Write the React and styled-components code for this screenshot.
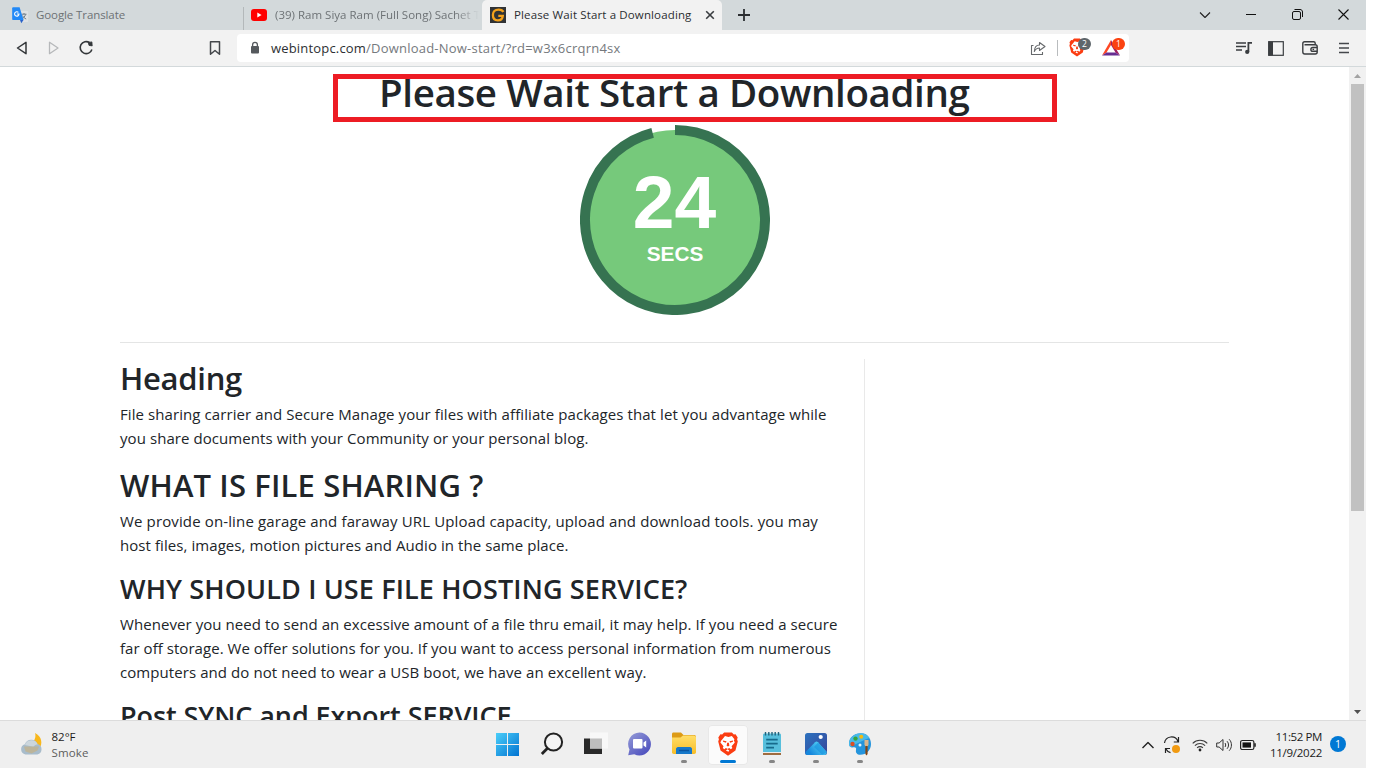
import React, { useLayoutEffect, useRef, useState } from "react";
import styled, { createGlobalStyle } from "styled-components";

const UI = `"Open Sans", "Noto Sans", sans-serif`;

const GlobalStyle = createGlobalStyle`
  *, *::before, *::after { box-sizing: border-box; }
  body { margin: 0; background: #fff; font-family: ${UI}; overflow: hidden; }
  h1, h2, h3, p { margin: 0; }
  svg { display: block; flex: none; }
`;

const Line = styled.span`
  display: block;
  width: max-content;
  white-space: pre;
`;

/* One line of text, tracked so that it spans the given width. */
function Fit({ w, children }) {
  const ref = useRef(null);
  const [spacing, setSpacing] = useState(0);
  useLayoutEffect(() => {
    const natural = ref.current.getBoundingClientRect().width;
    setSpacing((w - natural) / children.length);
  }, [w, children]);
  return (
    <Line ref={ref} style={{ letterSpacing: spacing }}>
      {children}
    </Line>
  );
}

const Desktop = styled.div`
  width: 1366px;
  height: 768px;
  display: flex;
  flex-direction: column;
  overflow: hidden;
`;

/* ---------- browser chrome ---------- */

const TabStrip = styled.div`
  height: 30px;
  flex: none;
  display: flex;
  background: #d3d9db;
`;

const Tab = styled.div`
  width: ${(p) => p.$w}px;
  height: 30px;
  flex: none;
  display: flex;
  align-items: center;
  gap: ${(p) => p.$gap ?? 8}px;
  padding-left: ${(p) => p.$pad}px;
  overflow: hidden;
  font-size: 11.5px;
  line-height: 30px;
  color: ${(p) => (p.$active ? "#2b2e31" : "#6d7275")};
  background: ${(p) => (p.$active ? "#f2f2f2" : "transparent")};
  border-radius: ${(p) => (p.$active ? "5px 5px 0 0" : "0")};
`;

const TabTitle = styled.div`
  width: ${(p) => p.$w}px;
  overflow: hidden;
  mask-image: ${(p) => (p.$fade ? "linear-gradient(90deg, #000 88%, transparent)" : "none")};
`;

const TabDivider = styled.div`
  width: 1px;
  height: 23px;
  margin-top: 7px;
  background: #b3b8ba;
`;

const NewTab = styled.div`
  padding: 9px 0 0 16px;
  flex: 1;
`;

const WindowControls = styled.div`
  display: flex;
  align-items: center;
  height: 29px;
  width: 167px;
  justify-content: space-between;
  padding: 0 17px 0 0;
`;

const Toolbar = styled.div`
  height: 37px;
  flex: none;
  display: flex;
  align-items: center;
  background: #f2f2f2;
  border-bottom: 1px solid #d3d9db;
`;

const NavButtons = styled.div`
  width: 237px;
  display: flex;
  align-items: center;
  padding-left: 15px;
  gap: 16px;
`;

const Push = styled.div`
  margin-left: ${(p) => p.$by}px;
`;

const AddressBar = styled.div`
  width: 892px;
  height: 28px;
  display: flex;
  align-items: center;
  padding-left: 12px;
  background: #fff;
  border-radius: 4px;
  font-size: 13px;
  color: #75797d;
`;

const Url = styled.div`
  display: flex;
  flex: 1;
  margin-left: 10px;
  line-height: 28px;
`;

const Host = styled.span`
  color: #2d3033;
`;

const AddressActions = styled.div`
  display: flex;
  align-items: center;
`;

const Separator = styled.div`
  width: 1px;
  height: 16px;
  margin: 0 11px 0 11px;
  background: #b9bcbe;
`;

const BadgeHost = styled.div`
  position: relative;
  width: ${(p) => p.$w}px;
  height: 20px;
`;

const Badge = styled.div`
  position: absolute;
  top: 0;
  left: ${(p) => p.$left}px;
  width: 13px;
  height: 12px;
  border-radius: 6px;
  background: ${(p) => p.$color};
  color: #fff;
  font-size: 8.5px;
  line-height: 12px;
  text-align: center;
`;

const ToolbarActions = styled.div`
  display: flex;
  flex: 1;
  align-items: center;
  padding-left: 107px;
`;

/* ---------- page ---------- */

const Viewport = styled.div`
  height: 653px;
  flex: none;
  display: flex;
  background: #fff;
`;

const Page = styled.div`
  position: relative;
  width: 1349px;
  height: 653px;
  overflow: hidden;
  color: #212529;
`;

const Highlight = styled.div`
  position: absolute;
  left: 333px;
  top: 7px;
  width: 724px;
  height: 48px;
  border: 5px solid #ed1c24;
`;

const Title = styled.h1`
  height: 58px;
  padding-left: 379px;
  font-size: 38.5px;
  font-weight: 540;
  line-height: 51px;
`;

const Timer = styled.div`
  width: 190px;
  height: 190px;
  margin-left: 580px;
  display: grid;

  & > * { grid-area: 1 / 1; }
`;

const TimerText = styled.div`
  z-index: 1;
  display: flex;
  flex-direction: column;
  align-items: center;
  padding-top: 41px;
  color: #fff;
  font-family: "Liberation Sans", Arial, sans-serif;
  font-weight: 700;
`;

const TimerCount = styled.div`
  margin-right: 1px;
  font-size: 75px;
  line-height: 72px;
`;

const TimerUnit = styled.div`
  margin-top: 5px;
  font-size: 20.8px;
  line-height: 22px;
`;

const Rule = styled.div`
  height: 1px;
  margin: 27px 120px 16px;
  background: #e4e5e5;
`;

const Columns = styled.div`
  display: flex;
  margin-left: 120px;
`;

const Article = styled.div`
  width: 745px;
  height: 400px;
  border-right: 1px solid #e9e9e9;
`;

const Heading = styled.h2`
  height: ${(p) => p.$h}px;
  font-size: ${(p) => p.$size}px;
  line-height: ${(p) => p.$lh}px;
  font-weight: 540;
`;

const Paragraph = styled.p`
  font-size: 15px;
  line-height: 24px;
`;

const Scrollbar = styled.div`
  width: 17px;
  display: flex;
  flex-direction: column;
  align-items: center;
  background: #f1f1f1;
`;

const ScrollArrow = styled.div`
  width: 17px;
  height: 17px;
  display: grid;
  place-items: center;
`;

const ScrollTrack = styled.div`
  flex: 1;
`;

const ScrollThumb = styled.div`
  width: 13px;
  height: 427px;
  background: #c1c1c1;
`;

/* ---------- taskbar ---------- */

const Taskbar = styled.div`
  height: 48px;
  flex: none;
  display: flex;
  background: #efefef;
  border-top: 1px solid #dcdcdc;
`;

const Weather = styled.div`
  width: 484px;
  display: flex;
  gap: 7.5px;
  padding: 8px 0 0 19px;
  font-size: 11.5px;
  line-height: 16px;
  color: #5d5d5d;
`;

const Temperature = styled.div`
  color: #1b1b1b;
`;

const Apps = styled.div`
  display: flex;
  gap: 4px;
  padding: 4px 0 0 4px;
  width: 661px;
`;

const AppSlot = styled.div`
  width: 40px;
  height: 40px;
  display: flex;
  flex-direction: column;
  align-items: center;
  padding-top: 7px;
  border-radius: 4px;
  background: ${(p) => (p.$active ? "#fbfbfb" : "transparent")};
  box-shadow: ${(p) => (p.$active ? "inset 0 0 0 1px #e8e8e8" : "none")};
`;

const Indicator = styled.div`
  width: ${(p) => (p.$active ? 16 : 6)}px;
  height: 3px;
  margin-top: 4px;
  border-radius: 2px;
  background: ${(p) => (p.$active ? "#0078d4" : "#868686")};
`;

const Tray = styled.div`
  flex: 1;
  display: flex;
  align-items: center;
`;

const Clock = styled.div`
  width: 60px;
  display: flex;
  flex-direction: column;
  align-items: flex-end;
  font-size: 11.5px;
  line-height: 16px;
  color: #1b1b1b;
`;

const Notice = styled.div`
  width: 16px;
  height: 16px;
  margin: -2px 0 0 8px;
  border-radius: 8px;
  background: #0078d4;
  color: #fff;
  font-size: 10.5px;
  line-height: 16px;
  text-align: center;
`;

/* ---------- icons ---------- */

const TranslateIcon = () => (
  <svg width="17" height="17" viewBox="0 0 17 17">
    <path d="M6 4h9.2c.6 0 .9.4.9.9v9.3c0 .5-.4.9-.9.9H9z" fill="#dfe2e4" />
    <path d="M9.5 7.2h5M12 6v1.2M13.6 7.4c-.6 2-2 3.5-3.6 4.4M10.6 8.6c.7 1.5 2 2.700 3.600 3.400" stroke="#6f7d88" strokeWidth="1" fill="none" />
    <path d="M8 13h3.500l-2.200 3.300z" fill="#2a62c9" />
    <path d="M1 .3h6.600l4 12.800H1.200C.6 13.100.2 12.700.2 12.100V1.200C.2.700.500.300 1 .300z" fill="#2289f7" />
    <path d="M6.400 5.400a2.200 2.200 0 1 0 .6 1.600H4.900" stroke="#fff" strokeWidth="1.100" fill="none" />
  </svg>
);

const YouTubeIcon = () => (
  <svg width="16" height="12" viewBox="0 0 16 12">
    <rect width="16" height="12" rx="3" fill="#f00" />
    <path d="M6.300 3.600v4.800L10.600 6z" fill="#fff" />
  </svg>
);

const SiteIcon = () => (
  <svg width="16" height="16" viewBox="0 0 16 16">
    <rect width="16" height="16" fill="#313335" />
    <path d="M13.300 5C12.600 3.200 11 2.700 8.600 2.700 4.800 2.700 2.900 4.500 2.900 8s1.600 5.300 4.900 5.300c3.200 0 4.700-.9 5-4.500H8.300" stroke="#f4a11a" strokeWidth="2.300" fill="none" />
  </svg>
);

const Stroke = ({ w = 16, h = 16, d, c = "#3a3d40", sw = 1.5, fill = "none" }) => (
  <svg width={w} height={h} viewBox={`0 0 ${w} ${h}`} fill={fill} stroke={c} strokeWidth={sw} strokeLinejoin="round">
    <path d={d} />
  </svg>
);

const ReloadIcon = () => (
  <svg width="16" height="16" viewBox="0 0 16 16">
    <path d="M11.600 2.700A6 6 0 1 0 13.900 9.500" fill="none" stroke="#34373a" strokeWidth="1.600" />
    <path d="M10.200 2.400l3.700-.5.300 4-3.200-.500z" fill="#34373a" stroke="#34373a" strokeWidth=".8" strokeLinejoin="round" />
  </svg>
);

const LockIcon = () => (
  <svg width="12" height="14" viewBox="0 0 12 14">
    <path d="M3.600 6V3.700a2.400 2.400 0 0 1 4.800 0V6" fill="none" stroke="#55595d" strokeWidth="1.300" />
    <rect x="2" y="5" width="8" height="7.500" rx="1" fill="#55595d" />
  </svg>
);

const BraveIcon = ({ w, h }) => (
  <svg width={w} height={h} viewBox="0 0 24 28">
    <path d="M7.500.5h9L18.800 3l2-.3 2.500 3.600-.7 2.200.8 2.600-2.700 10.400L12 27.600l-8.700-6.100L.600 11.100l.8-2.600-.7-2.200 2.500-3.600 2 .3z" fill="#fb3d12" />
    <path d="M8 4.800l4 .9 4-.9 3 3.600-.6 1.400 1 2.400-3.700 4.300.9 2.200-1.800 1.500-1.800-1.500-2.400 1.200 2.400 1.600L12 23l-3-1.500 2.400-1.600L9 18.700l-1.800 1.500-1.800-1.500.9-2.200-3.700-4.300 1-2.400L5 8.400z" fill="#fff" transform="translate(.5 0)" />
    <path d="M6 9.800l4.300.9-.7 1.900-3.300-1.200zM18 9.800l-4.300.9.7 1.900 3.300-1.200zM11 12.500h2l.6 3.500L12 17l-1.600-1z" fill="#fb3d12" />
  </svg>
);

const BatIcon = () => (
  <svg width="18" height="18" viewBox="0 -2 18 18">
    <path d="M9 0L0 15.500l4.500-2.900L9 5z" fill="#ff4724" />
    <path d="M9 0l9 15.500-4.500-2.900L9 5z" fill="#9e1f63" />
    <path d="M0 15.500h18l-4.500-2.900h-9z" fill="#662d91" />
  </svg>
);

const PlaylistIcon = () => (
  <svg width="16" height="14" viewBox="0 0 16 14">
    <path d="M0 2h10M0 5.500h10M0 9h6" stroke="#3a3d40" strokeWidth="1.400" />
    <path d="M12.400 11V1.900H16" fill="none" stroke="#3a3d40" strokeWidth="1.800" />
    <circle cx="11.200" cy="10.900" r="2.100" fill="#3a3d40" />
  </svg>
);

const SidebarIcon = () => (
  <svg width="16" height="15" viewBox="0 0 16 15">
    <rect x=".7" y=".7" width="14.600" height="13.600" fill="none" stroke="#3a3d40" strokeWidth="1.200" />
    <path d="M.5.5H5v14H.5z" fill="#3a3d40" />
  </svg>
);

const WalletIcon = () => (
  <svg width="16" height="14" viewBox="0 0 16 14" fill="none" stroke="#3a3d40" strokeWidth="1.400">
    <path d="M13.200 3.700V2.300C13.200 1.400 12.600.8 11.700.8H2.600C1.600.8.8 1.600.8 2.600v8.200c0 1.300.8 2.200 2 2.200h10.400c1.200 0 2-.8 2-2V5.800c0-1.200-.8-2-2-2H2.500" />
    <path d="M15 6.500h-4.200a1.900 1.900 0 0 0 0 3.800H15M10.500 8.400h1.600" />
  </svg>
);

const WeatherIcon = () => (
  <svg width="25" height="29" viewBox="0 -4 25 29">
    <path d="M16 0c1.300 4-.5 8-3.500 10.500l8 5c3.300-5 2.500-12-4.500-15.500z" fill="#f8b71b" />
    <path d="M6.500 21.500a5.300 5.300 0 0 1-.6-10.300 6.800 6.800 0 0 1 12.700-.3 5.500 5.500 0 0 1-.2 10.600z" fill="#a8bccb" />
    <path d="M6 12a6.800 6.800 0 0 1 12.700-.8 5.500 5.500 0 0 0-4.400 2.500z" fill="#ccd6dc" />
    <path d="M5 13.500h15l-1.500 4-6 3-6-2z" fill="#c3b28a" opacity=".75" />
  </svg>
);

const StartIcon = () => (
  <svg width="24" height="24" viewBox="0 0 24 24">
    <defs>
      <linearGradient id="start" x1="0" y1="0" x2="24" y2="24" gradientUnits="userSpaceOnUse">
        <stop stopColor="#4cd0fa" /><stop offset="1" stopColor="#0071d0" />
      </linearGradient>
    </defs>
    <path d="M0 1h11v11H0zM12 1h11v11H12zM0 13h11v11H0zM12 13h11v11H12z" fill="url(#start)" />
  </svg>
);

const SearchIcon = () => (
  <svg width="24" height="24" viewBox="0 0 24 24" fill="none" stroke="#222">
    <circle cx="13.500" cy="10" r="8.600" fill="#f4f4f4" strokeWidth="2" />
    <path d="M7.500 16.200L1.800 22" strokeWidth="2.800" />
  </svg>
);

const TaskViewIcon = () => (
  <svg width="24" height="24" viewBox="0 0 24 24">
    <path d="M0 6.500h18V22H0z" fill="#292929" />
    <path d="M6 .5h18v16H6z" fill="#f8f8f8" />
    <path d="M6 6.500h12v10H6z" fill="#bdbdbd" />
  </svg>
);

const ChatIcon = () => (
  <svg width="24" height="24" viewBox="0.5 0 24 24">
    <defs>
      <linearGradient id="chat" x1="2" y1="2" x2="20" y2="23" gradientUnits="userSpaceOnUse">
        <stop stopColor="#9197d6" /><stop offset="1" stopColor="#4a4cbd" />
      </linearGradient>
    </defs>
    <path d="M12 .5a11.500 11.500 0 1 1-5.200 21.800L.7 23.200 2 17.500A11.500 11.500 0 0 1 12 .5z" fill="url(#chat)" />
    <rect x="5.500" y="7" width="9.500" height="9.500" rx="1" fill="#fff" />
    <path d="M16 10.500l2.700-2v7l-2.700-2z" fill="#fff" />
  </svg>
);

const FolderIcon = () => (
  <svg width="24" height="24" viewBox="0 0 24 24">
    <defs>
      <linearGradient id="folder" x1="0" y1="4" x2="0" y2="22" gradientUnits="userSpaceOnUse">
        <stop stopColor="#ffdd67" /><stop offset="1" stopColor="#f8bd27" />
      </linearGradient>
    </defs>
    <path d="M0 2c0-.8.600-1.500 1.500-1.500H9L11.500 3H22c1 0 2 .7 2 1.500V9H0z" fill="#dd9b16" />
    <path d="M0 5.500h8.500L11 3.500h11c1.200 0 2 .8 2 2v14.800c0 1.200-.8 1.700-1.800 1.700H1.800C.8 22 0 21.400 0 20.300z" fill="url(#folder)" />
    <path d="M4 22v-5c0-1 .8-2 2-2h12c1.200 0 2 1 2 2v5z" fill="#1678c9" />
    <path d="M7 18.500h10" stroke="#0b55a0" strokeWidth="1.500" />
  </svg>
);

const NotepadIcon = () => (
  <svg width="24" height="24" viewBox="0 0 24 24">
    <path d="M3 3c0-1 .6-1.500 1.500-1.500h15c.9 0 1.500.5 1.500 1.500v18H3z" fill="#57bfdc" />
    <path d="M3 20h18v1H3z" fill="#ececec" />
    <path d="M3 21.200h18v1.600H3z" fill="#8c4c13" />
    <path d="M5.500 0v3.500M8.800 0v3.500M12 0v3.500M15.200 0v3.500M18.500 0v3.500" stroke="#22637c" strokeWidth="1.400" />
    <path d="M6.200 7.700h11.500M6.200 11.700h11.500M6.200 15.700H14" stroke="#176b8c" strokeWidth="1.700" />
  </svg>
);

const PhotosIcon = () => (
  <svg width="24" height="24" viewBox="0 0 24 24">
    <defs>
      <linearGradient id="photo" x1="2" y1="2" x2="20" y2="20" gradientUnits="userSpaceOnUse">
        <stop stopColor="#2d70bd" /><stop offset="1" stopColor="#354b9f" />
      </linearGradient>
      <linearGradient id="hill" x1="5" y1="20" x2="16" y2="10" gradientUnits="userSpaceOnUse">
        <stop stopColor="#1687dc" /><stop offset="1" stopColor="#54d2f5" />
      </linearGradient>
    </defs>
    <rect x="1" y="1" width="22" height="22" rx="2.500" fill="url(#photo)" />
    <path d="M1.500 20L11 10.300c1-1 2-1 3 0l8.600 9.500v1.300c0 1-.8 1.900-2 1.900H3c-1 0-1.500-.8-1.500-1.500z" fill="url(#hill)" />
    <path d="M14 10.500l8.500 9.300v1.200L18 22.500 10 15z" fill="#1992df" opacity=".65" />
    <circle cx="16.700" cy="5" r="2.100" fill="#fff" />
  </svg>
);

const PaintIcon = () => (
  <svg width="24" height="24" viewBox="0 0 24 24">
    <path d="M13 1.200C6 1.200 1 6 1 11.500c0 3.500 2 4.200 4.500 3.800 2.300-.3 3 .7 2.500 2.700-.6 2.600 1 4.800 4.200 4.800C18.500 22.800 23 18 23 12S19 1.200 13 1.200z" fill="#2494dc" />
    <path d="M13 1.200C6 1.200 1 6 1 11.500c0 2 .6 3 1.600 3.600C7 12 16 8 21.500 6 19.800 3 16.800 1.200 13 1.200z" fill="#48b9e8" />
    <circle cx="4.500" cy="12" r="2.200" fill="#db4e24" />
    <circle cx="7.500" cy="6.600" r="2.200" fill="#36a63c" />
    <circle cx="13.200" cy="4.700" r="2" fill="#f5b90f" />
    <circle cx="12" cy="13" r="1.500" fill="#e7f5fb" />
    <path d="M16.500 8h4v4.500l-.8 2h-2.400l-.8-2z" fill="#d9b58c" />
    <path d="M17.400 14h2.200v8l-1.100 1.500-1.100-1.500z" fill="#824413" />
  </svg>
);

const SyncIcon = () => (
  <svg width="18" height="18" viewBox="0 0 18 18" fill="none" stroke="#222" strokeWidth="1.200">
    <path d="M1.500 7A7 7 0 0 1 15 5.500M15.500 1v5h-4.700M2.500 17v-4.500H7M3 13a7 7 0 0 0 4.500 3.700" />
    <circle cx="13" cy="13" r="4" fill="#f19a11" stroke="none" />
  </svg>
);

const WifiIcon = () => (
  <svg width="16" height="14" viewBox="0 0 16 14" fill="none" stroke="#3b3b3b" strokeWidth="1.100">
    <path d="M.7 5.300a10.300 10.300 0 0 1 14.600 0M2.900 7.600a7.200 7.200 0 0 1 10.200 0M5.100 9.800a4.100 4.100 0 0 1 5.800 0" />
    <circle cx="8" cy="12" r="1.400" fill="#222" stroke="none" />
  </svg>
);

const VolumeIcon = () => (
  <svg width="17" height="14" viewBox="0 0 17 14" fill="none" stroke="#333" strokeWidth="1">
    <path d="M.7 5h2.400L7 1.500v11L3.100 9H.7z" strokeLinejoin="round" />
    <path d="M9 5c.9 1 .9 3 0 4M11 3.200c2 2 2 5.600 0 7.600M13.200 1.300c3 3 3 8.400 0 11.400" />
  </svg>
);

const BatteryIcon = () => (
  <svg width="17" height="12" viewBox="0 0 17 12">
    <rect x=".6" y="1.500" width="13.300" height="9" rx="1.800" fill="none" stroke="#222" strokeWidth="1.200" />
    <rect x="2.500" y="3.400" width="8.500" height="5.200" fill="#151515" />
    <path d="M15 4.200v3.600" stroke="#222" strokeWidth="1.600" />
  </svg>
);

const TimerRing = () => {
  const a = (-14.4 * Math.PI) / 180;
  const x = 95 + 90 * Math.sin(a);
  const y = 95 - 90 * Math.cos(a);
  return (
    <svg width="190" height="190" viewBox="0 0 190 190">
      <circle cx="95" cy="95" r="90" fill="#76c97b" />
      <path d={`M95 5A90 90 0 1 1 ${x} ${y}`} fill="none" stroke="#367351" strokeWidth="10" />
    </svg>
  );
};

const apps = [
  { icon: <StartIcon /> },
  { icon: <SearchIcon /> },
  { icon: <TaskViewIcon /> },
  { icon: <ChatIcon /> },
  { icon: <FolderIcon />, running: true },
  { icon: <BraveIcon w={24} h={24} />, running: true, active: true },
  { icon: <NotepadIcon />, running: true },
  { icon: <PhotosIcon />, running: true },
  { icon: <PaintIcon />, running: true },
];

export default function App() {
  return (
    <Desktop>
      <GlobalStyle />
      <TabStrip>
        <Tab $w={243} $pad={12} $gap={7}>
          <TranslateIcon />
          <Fit w={89}>Google Translate</Fit>
        </Tab>
        <TabDivider />
        <Tab $w={238} $pad={7}>
          <YouTubeIcon />
          <TabTitle $w={204} $fade>
            <Fit w={205}>(39) Ram Siya Ram (Full Song) Sachet T</Fit>
          </TabTitle>
        </Tab>
        <Tab $w={240} $pad={8} $active>
          <SiteIcon />
          <TabTitle $w={183}>
            <Fit w={177.5}>Please Wait Start a Downloading</Fit>
          </TabTitle>
          <Stroke w={10} h={10} d="M1.200 1.200l7.600 7.600M8.800 1.200L1.200 8.800" sw={1.600} />
        </Tab>
        <NewTab>
          <Stroke w={12} h={12} d="M6 0v12M0 6h12" sw={1.800} c="#2b2e31" />
        </NewTab>
        <WindowControls>
          <Stroke w={12} h={8} d="M1 1.500l5 5 5-5" sw={1.100} c="#222" />
          <Stroke w={10} h={1} d="M0 .5h10" sw={1} c="#111" />
          <svg width="11" height="11" viewBox="0 0 11 11" fill="none" stroke="#111">
            <rect x=".5" y="2.500" width="8" height="8" rx="1.500" />
            <path d="M2.500.500h5.500c1.500 0 2.500 1 2.500 2.500V8" />
          </svg>
          <Stroke w={11} h={11} d="M.5.500l10 10M10.500.500l-10 10" sw={1.100} c="#111" />
        </WindowControls>
      </TabStrip>

      <Toolbar>
        <NavButtons>
          <Stroke d="M11 2.300v11.400L2.500 8z" sw={1.500} c="#34373a" />
          <Stroke d="M2.500 2.300v11.400L11 8z" sw={1.300} c="#b6b8ba" />
          <Push $by={-1}><ReloadIcon /></Push>
          <Push $by={98}>
            <Stroke w={14} d="M2.500 1.700h9v12.600L7 10.500l-4.500 3.800z" sw={1.500} c="#44474b" />
          </Push>
        </NavButtons>
        <AddressBar>
          <LockIcon />
          <Url>
            <Host><Fit w={95}>webintopc.com</Fit></Host>
            <Fit w={254.5}>/Download-Now-start/?rd=w3x6crqrn4sx</Fit>
          </Url>
          <AddressActions>
            <Stroke w={16} h={16} d="M3.500 5.500H1.500v9h11v-2.500M9.500 2.500l5.500 4-5.500 4V8C7 8 5.500 9 4.300 11.500 4.500 7.500 6.500 5 9.500 5z" sw={1.100} c="#66696c" />
            <Separator />
            <BadgeHost $w={33}>
              <BraveIcon w={16} h={19} />
              <Badge $left={9} $color="#5f666b">2</Badge>
            </BadgeHost>
            <BadgeHost $w={27}>
              <BatIcon />
              <Badge $left={10} $color="#fb4210">1</Badge>
            </BadgeHost>
          </AddressActions>
        </AddressBar>
        <ToolbarActions>
          <PlaylistIcon />
          <Push $by={16}><SidebarIcon /></Push>
          <Push $by={18}><WalletIcon /></Push>
          <Push $by={21}><Stroke w={10} h={12} d="M0 1.500h10M0 6h10M0 10.500h10" sw={1.600} c="#44474b" /></Push>
        </ToolbarActions>
      </Toolbar>

      <Viewport>
        <Page>
          <Title><Fit w={590.5}>Please Wait Start a Downloading</Fit></Title>
          <Timer>
            <TimerRing />
            <TimerText>
              <TimerCount>24</TimerCount>
              <TimerUnit>SECS</TimerUnit>
            </TimerText>
          </Timer>
          <Rule />
          <Columns>
            <Article>
              <Heading $size={31} $h={43} $lh={38}><Fit w={122}>Heading</Fit></Heading>
              <Paragraph>
                <Fit w={706.5}>File sharing carrier and Secure Manage your files with affiliate packages that let you advantage while</Fit>
                <Fit w={468.5}>you share documents with your Community or your personal blog.</Fit>
              </Paragraph>
              <Heading $size={31} $h={59} $lh={70}><Fit w={363.5}>WHAT IS FILE SHARING ?</Fit></Heading>
              <Paragraph>
                <Fit w={698}>We provide on-line garage and faraway URL Upload capacity, upload and download tools. you may</Fit>
                <Fit w={448.5}>host files, images, motion pictures and Audio in the same place.</Fit>
              </Paragraph>
              <Heading $size={27} $h={55} $lh={64}><Fit w={567.5}>WHY SHOULD I USE FILE HOSTING SERVICE?</Fit></Heading>
              <Paragraph>
                <Fit w={717.5}>Whenever you need to send an excessive amount of a file thru email, it may help. If you need a secure</Fit>
                <Fit w={711}>far off storage. We offer solutions for you. If you want to access personal information from numerous</Fit>
                <Fit w={526.5}>computers and do not need to wear a USB boot, we have an excellent way.</Fit>
              </Paragraph>
              <Heading $size={27} $h={55} $lh={64}><Fit w={391.5}>Post SYNC and Export SERVICE</Fit></Heading>
            </Article>
          </Columns>
          <Highlight />
        </Page>
        <Scrollbar>
          <ScrollArrow>
            <svg width="7" height="4" viewBox="0 0 7 4"><path d="M3.500 0L7 4H0z" fill="#a3a3a3" /></svg>
          </ScrollArrow>
          <ScrollTrack><ScrollThumb /></ScrollTrack>
          <ScrollArrow>
            <svg width="7" height="4" viewBox="0 0 7 4"><path d="M0 0h7L3.500 4z" fill="#505050" /></svg>
          </ScrollArrow>
        </Scrollbar>
      </Viewport>

      <Taskbar>
        <Weather>
          <WeatherIcon />
          <div>
            <Temperature><Fit w={24}>82°F</Fit></Temperature>
            <Fit w={37}>Smoke</Fit>
          </div>
        </Weather>
        <Apps>
          {apps.map((app, i) => (
            <AppSlot key={i} $active={app.active}>
              {app.icon}
              {app.running && <Indicator $active={app.active} />}
            </AppSlot>
          ))}
        </Apps>
        <Tray>
          <Push $by={-3}><Stroke w={12} h={8} d="M.5 7L6 1.500 11.500 7" sw={1.400} c="#222" /></Push>
          <Push $by={9}><SyncIcon /></Push>
          <Push $by={11}><WifiIcon /></Push>
          <Push $by={8}><VolumeIcon /></Push>
          <Push $by={7}><BatteryIcon /></Push>
          <Push $by={5}>
            <Clock>
              <Fit w={46.500}>11:52 PM</Fit>
              <Fit w={52}>11/9/2022</Fit>
            </Clock>
          </Push>
          <Notice>1</Notice>
        </Tray>
      </Taskbar>
    </Desktop>
  );
}
